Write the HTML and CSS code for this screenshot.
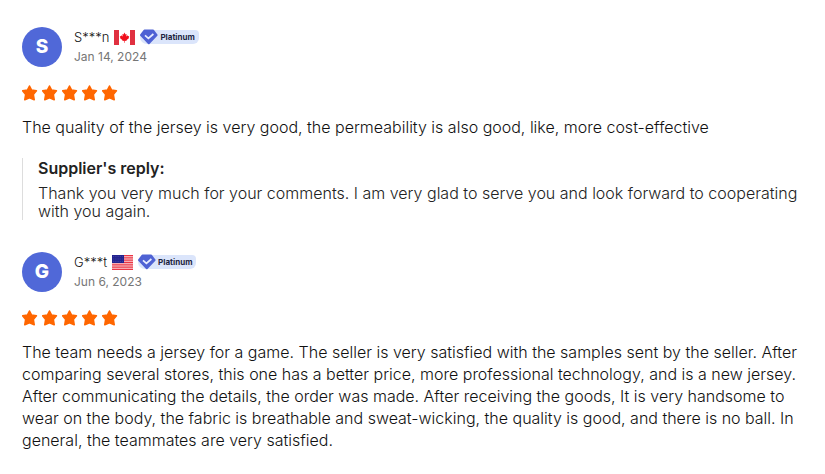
FILE: index.html
```
<!DOCTYPE html>
<html lang="en">
<head>
    <meta charset="UTF-8">
    <meta name="viewport" content="width=device-width, initial-scale=1.0">
    <title>Reviews</title>
    <link rel="stylesheet" href="styles.css">
</head>
<body>
    <svg class="sprite" aria-hidden="true">
        <symbol id="star" viewBox="0 0 16 16">
            <path d="M7.5 1 9.6 5 14.4 5.8 11.3 9.5 12.2 14.7 7.5 12.8 2.8 14.7 3.7 9.5 .6 5.8 5.4 5Z" stroke="#ff6600" stroke-width="1.6" stroke-linejoin="round"/>
        </symbol>
        <symbol id="diamond" viewBox="0 0 18 16">
            <path d="M4.4 1.6h8.8L16.6 6 8.8 14.2 1 6Z" fill="#4f62d4" stroke="#4f62d4" stroke-width="2" stroke-linejoin="round"/>
            <path d="M5 6.4 8.4 9.4 13.4 5" fill="none" stroke="#e8eeff" stroke-width="1.7"/>
        </symbol>
    </svg>

    <main class="reviews">
        <article class="review">
            <header class="review-header">
                <div class="avatar">S</div>
                <div class="user-info">
                    <div class="user-line">
                        <span class="user-name">S***n</span>
                        <svg class="flag" viewBox="0 0 21 15" role="img" aria-label="Canada">
                            <rect width="21" height="15" fill="#fff"/>
                            <rect width="5" height="15" fill="#e03040"/>
                            <rect x="16" width="5" height="15" fill="#e03040"/>
                            <path d="M10.5 2.5 11.5 4.4 12.6 3.9 12.3 6.4 13.7 5.3 14 6.2 15.2 6 14.7 7.6 15.1 8.1 12.4 10.3 12.6 11 10.8 10.8V12.8H10.2V10.8L8.4 11 8.6 10.3 5.9 8.1 6.3 7.6 5.8 6 7 6.2 7.3 5.3 8.7 6.4 8.4 3.9 9.5 4.4Z" fill="#f0101c"/>
                        </svg>
                        <span class="level"><svg class="level-icon"><use href="#diamond"/></svg>Platinum</span>
                    </div>
                    <time class="date" datetime="2024-01-14">Jan 14, 2024</time>
                </div>
            </header>
            <div class="stars" role="img" aria-label="5 stars">
                <svg><use href="#star"/></svg>
                <svg><use href="#star"/></svg>
                <svg><use href="#star"/></svg>
                <svg><use href="#star"/></svg>
                <svg><use href="#star"/></svg>
            </div>
            <p class="review-text">The quality of the jersey is very good, the permeability is also good, like, more cost-effective</p>
            <div class="reply">
                <h4>Supplier's reply:</h4>
                <p>Thank you very much for your comments. I am very glad to serve you and look forward to cooperating with you again.</p>
            </div>
        </article>

        <article class="review">
            <header class="review-header">
                <div class="avatar">G</div>
                <div class="user-info">
                    <div class="user-line">
                        <span class="user-name">G***t</span>
                        <svg class="flag" viewBox="0 0 21 15" role="img" aria-label="United States">
                            <rect width="21" height="15" fill="#fbd5d8"/>
                            <path d="M0 .6H21M0 2.9H21M0 5.2H21M0 7.5H21M0 9.8H21M0 12.1H21M0 14.4H21" stroke="#ea3644" stroke-width="1.3"/>
                            <rect width="12" height="8" fill="#23238f"/>
                            <path d="M1 1.5H11M1 4H11M1 6.5H11" stroke="#5a5ab0" stroke-width=".6" stroke-dasharray=".8 1"/>
                        </svg>
                        <span class="level"><svg class="level-icon"><use href="#diamond"/></svg>Platinum</span>
                    </div>
                    <time class="date" datetime="2023-06-06">Jun 6, 2023</time>
                </div>
            </header>
            <div class="stars" role="img" aria-label="5 stars">
                <svg><use href="#star"/></svg>
                <svg><use href="#star"/></svg>
                <svg><use href="#star"/></svg>
                <svg><use href="#star"/></svg>
                <svg><use href="#star"/></svg>
            </div>
            <p class="review-text">The team needs a jersey for a game. The seller is very satisfied with the samples sent by the seller. After comparing several stores, this one has a better price, more professional technology, and is a new jersey. After communicating the details, the order was made. After receiving the goods, It is very handsome to wear on the body, the fabric is breathable and sweat-wicking, the quality is good, and there is no ball. In general, the teammates are very satisfied.</p>
        </article>
    </main>
</body>
</html>
```

FILE: styles.css
```
body {
    margin: 0;
    background-color: #fff;
    color: #111;
    font-family: Inter, "Liberation Sans", sans-serif;
    font-size: 16px;
    font-weight: 300;
    line-height: 22px;
}
.sprite {
    display: none;
}
.reviews {
    display: flex;
    flex-direction: column;
    gap: 32px;
    padding: 27px 22px 22px;
}
.review-header {
    display: flex;
    align-items: center;
    gap: 12px;
}
.avatar {
    display: flex;
    align-items: center;
    justify-content: center;
    width: 40px;
    height: 40px;
    border-radius: 50%;
    background-color: #5068d8;
    color: #fff;
    font-size: 19px;
    font-weight: 800;
}
.user-info {
    line-height: 20px;
}
.user-line {
    display: flex;
    align-items: center;
    gap: 5px;
    height: 20px;
}
.user-name {
    font-size: 13px;
}
.flag {
    width: 21px;
    height: 15px;
}
.level {
    display: flex;
    align-items: center;
    gap: 2px;
    height: 14px;
    padding-right: 4px;
    border-radius: 7px 4px 6px 7px;
    background-color: #dbe5fb;
    color: #1c2340;
    font-size: 8px;
    font-weight: 700;
}
.level-icon {
    width: 18px;
    height: 16px;
}
.date {
    display: block;
    color: #767676;
    font-size: 12px;
    font-weight: 400;
}
.stars {
    display: flex;
    gap: 4px;
    margin-top: 18px;
}
.stars svg {
    width: 16px;
    height: 16px;
    fill: #ff6600;
}
.review-text {
    margin: 15px 0 0;
}
.reply {
    margin-top: 20px;
    padding-left: 15px;
    border-left: 1px solid #ddd;
}
.reply h4 {
    margin: 0 0 6px;
    color: #222;
    font-size: 16px;
    font-weight: 600;
    line-height: 20px;
}
.reply p {
    margin: 0;
    color: #222;
    line-height: 18px;
}
```
